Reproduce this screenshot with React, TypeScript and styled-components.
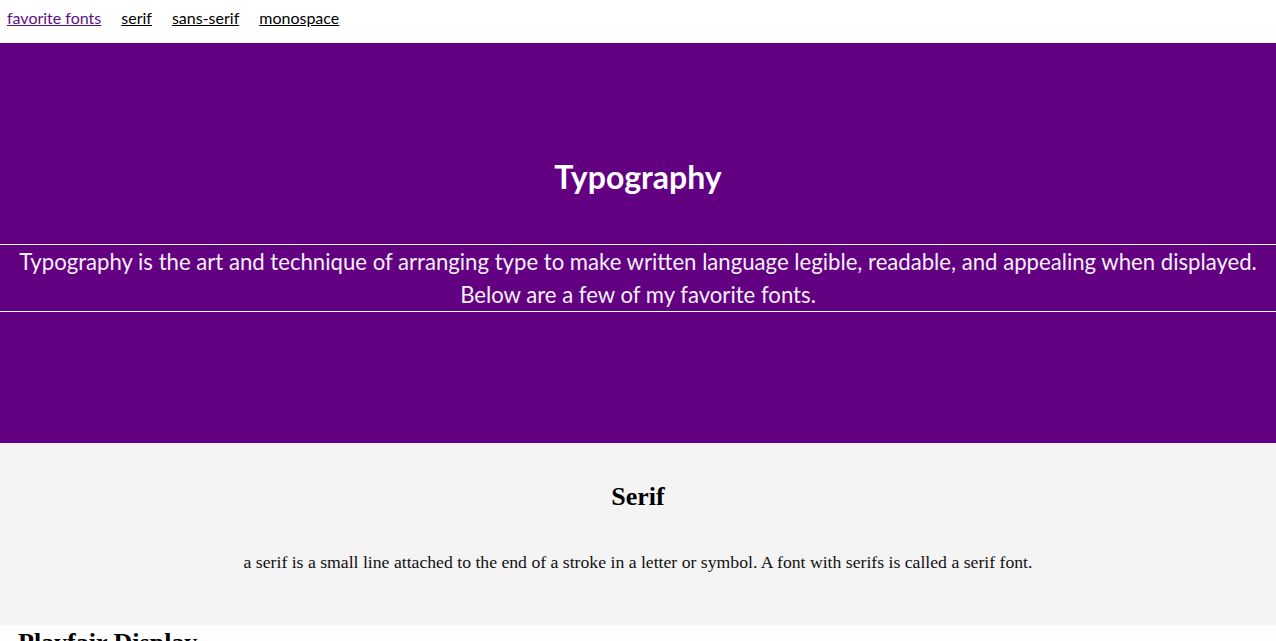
import React from 'react';
import styled, { createGlobalStyle } from 'styled-components';

const GlobalStyle = createGlobalStyle`
  body {
    margin: 0;
    font-family: Lato, "Open Sans", sans-serif;
    background: #fdfdfd;
  }
`;

const Nav = styled.nav`
  display: flex;
  align-items: center;
  gap: 20px;
  height: 43px;
  padding: 0 7px;
  background: #ffffff;
  box-sizing: border-box;
`;

const NavLink = styled.a<{ $visited?: boolean }>`
  font-family: Lato, sans-serif;
  font-size: 16px;
  color: ${(p) => (p.$visited ? '#5b0f86' : '#000000')};
  text-decoration: underline;
  margin-top: -8px;
`;

const Hero = styled.header`
  display: flex;
  flex-direction: column;
  align-items: stretch;
  height: 400px;
  padding-top: 115px;
  box-sizing: border-box;
  background: #630082;
  color: #ffffff;
  text-align: center;
`;

const Title = styled.h1`
  margin: 0 0 48px;
  font-family: Lato, sans-serif;
  font-size: 32px;
  font-weight: 700;
  line-height: 38px;
`;

const Intro = styled.p`
  margin: 0;
  border-top: 1px solid #ffffff;
  border-bottom: 1px solid #ffffff;
  font-family: Lato, sans-serif;
  font-size: 22.15px;
  line-height: 33px;
  color: #f4f0f6;
`;

const FontSection = styled.section<{ $bg: string }>`
  background: ${(p) => p.$bg};
  padding: 37px 18px 51px;
  text-align: center;
`;

const SectionTitle = styled.h2`
  margin: 0 0 36px;
  font-family: "Liberation Serif", serif;
  font-size: 26px;
  font-weight: 700;
  line-height: 34px;
  color: #000;
`;

const SectionText = styled.p`
  margin: 0;
  font-family: "Liberation Serif", serif;
  font-size: 17.7px;
  line-height: 24px;
  color: #111;
`;

const FontName = styled.h3`
  margin: 0;
  padding: 3px 18px 0;
  font-family: "Liberation Serif", serif;
  font-size: 26px;
  font-weight: 700;
  color: #000;
`;

export default function App() {
  return (
    <>
      <GlobalStyle />
      <Nav>
        <NavLink href="#" $visited>favorite fonts</NavLink>
        <NavLink href="#">serif</NavLink>
        <NavLink href="#">sans-serif</NavLink>
        <NavLink href="#">monospace</NavLink>
      </Nav>
      <Hero>
        <Title>Typography</Title>
        <Intro>
          Typography is the art and technique of arranging type to make written language legible, readable, and appealing when displayed.
          <br />
          Below are a few of my favorite fonts.
        </Intro>
      </Hero>
      <FontSection $bg="#f4f4f4">
        <SectionTitle>Serif</SectionTitle>
        <SectionText>
          a serif is a small line attached to the end of a stroke in a letter or symbol. A font with serifs is called a serif font.
        </SectionText>
      </FontSection>
      <FontName>Playfair Display</FontName>
    </>
  );
}
